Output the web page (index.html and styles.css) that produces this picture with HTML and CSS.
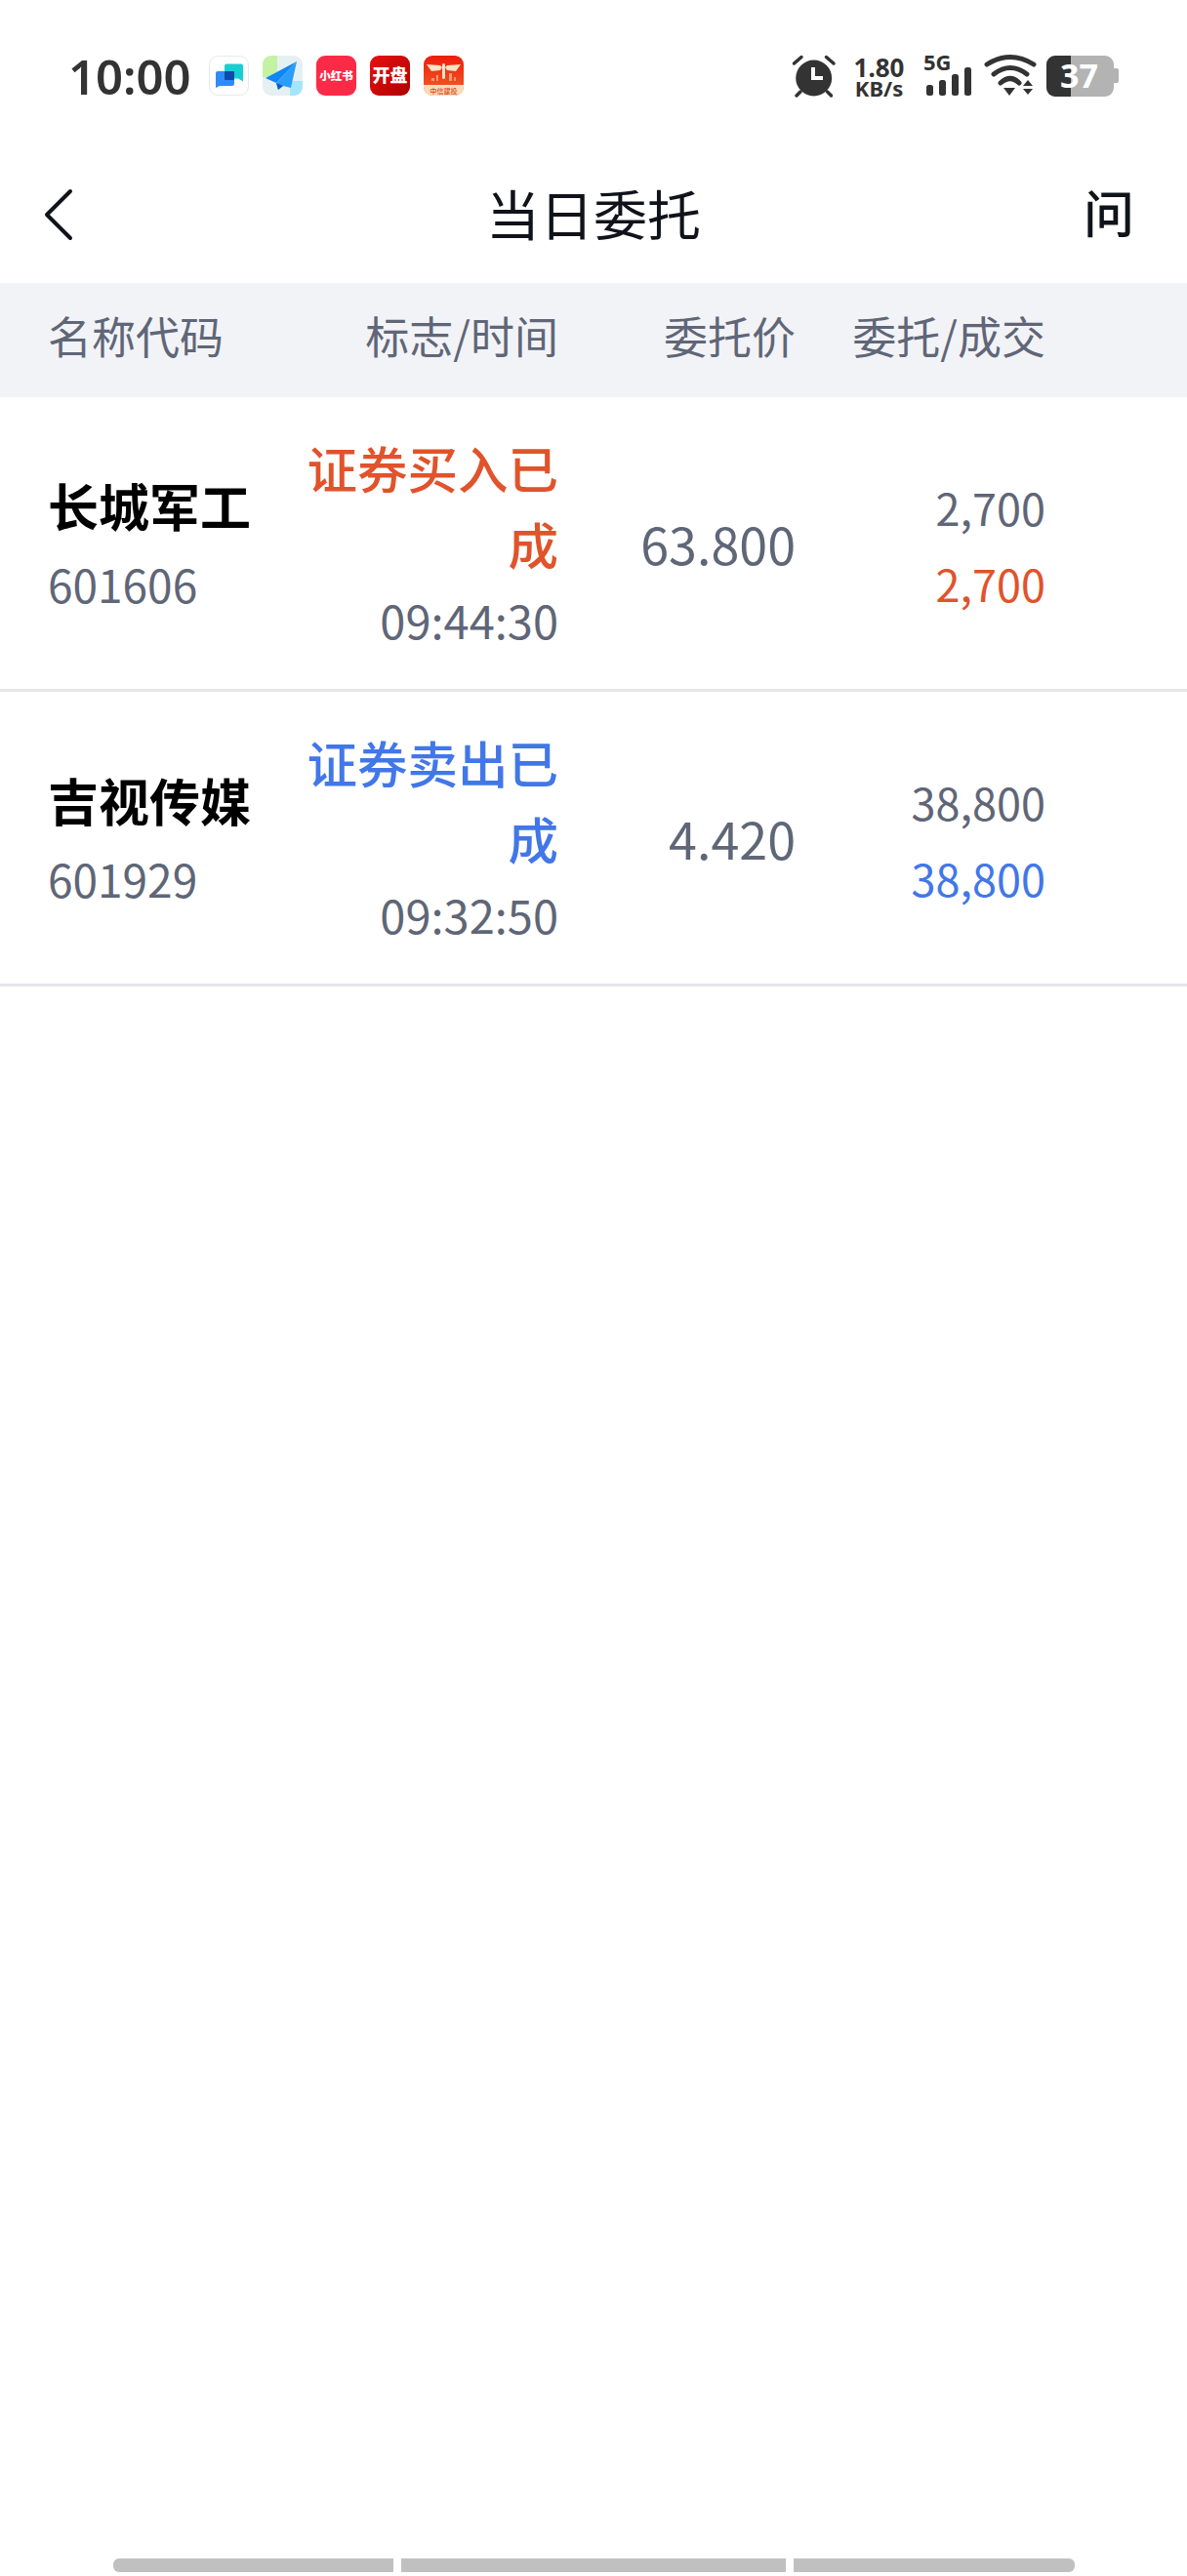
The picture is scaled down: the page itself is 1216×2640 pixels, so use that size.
FILE: index.html
```html
<!DOCTYPE html>
<html lang="zh-CN">
<head>
    <meta charset="UTF-8">
    <meta name="viewport" content="width=device-width, initial-scale=1.0">
    <title>当日委托</title>
    <link rel="stylesheet" href="styles.css">
</head>
<body>

    <div class="status-bar">
        <span class="clock">10:00</span>
        <div class="app-icons">
            <svg class="app-icon" viewBox="0 0 41 41">
                <rect x="0.5" y="0.5" width="40" height="40" rx="9" fill="#fff" stroke="#e6e9ea"/>
                <path d="M16 10.5a2 2 0 0 1 2-2h15a2 2 0 0 1 2 2v16l-5-3H18a2 2 0 0 1-2-2z" fill="#17cfd2"/>
                <path d="M7 18a2 2 0 0 1 2-2h15a2 2 0 0 1 2 2v11a2 2 0 0 1-2 2H11l-4 2z" fill="#2f8bf8"/>
                <rect x="16" y="16" width="10" height="9" rx="1" fill="#0b4bab"/>
            </svg>
            <svg class="app-icon" viewBox="0 0 41 41">
                <rect width="41" height="41" rx="9" fill="#e6f0f0"/>
                <path d="M0 9a9 9 0 0 1 9-9h6v22H0z" fill="#c5f2a2"/>
                <path d="M28 26h13v6a9 9 0 0 1-9 9h-4z" fill="#a3e6fb"/>
                <path d="M35 6L3 23l11 5z" fill="#0f86f5"/>
                <path d="M35 6L14 28l2 7 5-4 8 2z" fill="#2b9dfb"/>
                <path d="M14 28l2 7 5-4z" fill="#0a5fc4"/>
            </svg>
            <svg class="app-icon" viewBox="0 0 41 41">
                <rect width="41" height="41" rx="9" fill="#fb2a47"/>
                <text x="20.5" y="25" class="icon-text xhs">小红书</text>
            </svg>
            <svg class="app-icon" viewBox="0 0 41 41">
                <defs>
                    <linearGradient id="kp" x1="0" y1="0" x2="1" y2="1">
                        <stop offset="0" stop-color="#e81010"/>
                        <stop offset="1" stop-color="#b00000"/>
                    </linearGradient>
                    <linearGradient id="zx" x1="0" y1="0" x2="0" y2="1">
                        <stop offset="0" stop-color="#ee1c0c"/>
                        <stop offset="1" stop-color="#f2622a"/>
                    </linearGradient>
                </defs>
                <rect width="41" height="41" rx="9" fill="url(#kp)"/>
                <text x="20.5" y="27" class="icon-text kp">开盘</text>
            </svg>
            <svg class="app-icon" viewBox="0 0 41 41">
                <rect width="41" height="41" rx="9" fill="url(#zx)"/>
                <path d="M3 9l14 1 2 2-2 3-9 1zM38 9l-14 1-2 2 2 3 9 1z" fill="#fbe3c4"/>
                <rect x="19" y="8" width="3" height="16" rx="1.5" fill="#fbe3c4"/>
                <path d="M8 26v-3h3v3zM13 26v-6h2v6zM26 26v-8h3v8zM31 26v-4h2v4z" fill="#f79a70"/>
                <path d="M0 30h41v2a9 9 0 0 1-9 9H9a9 9 0 0 1-9-9z" fill="#fbdcb6"/>
                <text x="20.5" y="38.5" class="icon-text zx">中信建投</text>
            </svg>
        </div>

        <div class="status-right">
            <svg class="alarm" viewBox="0 0 44 42">
                <circle cx="21.7" cy="23" r="18.5" fill="#333"/>
                <path d="M21 12v11h10" fill="none" stroke="#fff" stroke-width="4"/>
                <path d="M1.5 8L9 1.5M42 8L34.5 1.5M4 41l4-4M39.5 41l-4-4" fill="none" stroke="#333" stroke-width="3.5" stroke-linecap="round"/>
            </svg>
            <div class="net-speed">
                <span class="speed-num">1.80</span>
                <span class="speed-unit">KB/s</span>
            </div>
            <svg class="signal" viewBox="0 0 50 42">
                <text x="0" y="15" class="signal-text">5G</text>
                <rect x="3" y="30" width="7" height="11" rx="2.5" fill="#333"/>
                <rect x="16" y="25" width="7" height="16" rx="2.5" fill="#333"/>
                <rect x="29" y="19" width="7" height="22" rx="2.5" fill="#333"/>
                <rect x="42" y="12" width="7" height="29" rx="2.5" fill="#333"/>
            </svg>
            <svg class="wifi" viewBox="0 0 51 41">
                <path d="M2 9Q26 -6 50 9M9 19Q26 6 43 19M16 28Q26 19 35 28" fill="none" stroke="#333" stroke-width="5" stroke-linecap="round"/>
                <path d="M19 33h12l-6 8zM39 31l5-6 5 6zM39 34h10l-5 6z" fill="#333"/>
            </svg>
            <svg class="battery" viewBox="0 0 74 42">
                <rect x="0" y="0" width="69" height="42" rx="9" fill="#b3b3b3"/>
                <path d="M25 0H9a9 9 0 0 0-9 9v24a9 9 0 0 0 9 9h16z" fill="#333"/>
                <path d="M69 13h3a2 2 0 0 1 2 2v11a2 2 0 0 1-2 2h-3z" fill="#b3b3b3"/>
                <text x="33.5" y="33" class="battery-text">37</text>
            </svg>
        </div>
    </div>

    <div class="nav-bar">
        <svg class="back-icon" viewBox="0 0 30 52">
            <path d="M27 2L3 26l24 24" fill="none" stroke="#10131a" stroke-width="4" stroke-linecap="round" stroke-linejoin="round"/>
        </svg>
        <h1>当日委托</h1>
        <span class="ask">问</span>
    </div>

    <div class="table-row table-head">
        <div class="col-name">名称代码</div>
        <div class="col-flag">标志/时间</div>
        <div class="col-price">委托价</div>
        <div class="col-qty">委托/成交</div>
    </div>

    <div class="table-row order">
        <div class="col-name">
            <div class="stock-name">长城军工</div>
            <div class="stock-code">601606</div>
        </div>
        <div class="col-flag">
            <div class="flag buy">证券买入已成</div>
            <div class="time">09:44:30</div>
        </div>
        <div class="col-price">63.800</div>
        <div class="col-qty">
            <div>2,700</div>
            <div class="buy">2,700</div>
        </div>
    </div>

    <div class="table-row order">
        <div class="col-name">
            <div class="stock-name">吉视传媒</div>
            <div class="stock-code">601929</div>
        </div>
        <div class="col-flag">
            <div class="flag sell">证券卖出已成</div>
            <div class="time">09:32:50</div>
        </div>
        <div class="col-price">4.420</div>
        <div class="col-qty">
            <div>38,800</div>
            <div class="sell">38,800</div>
        </div>
    </div>

    <div class="scroll-bars">
        <div class="bar bar-left"></div>
        <div class="bar bar-mid"></div>
        <div class="bar bar-right"></div>
    </div>

</body>
</html>
```

FILE: styles.css
```css
body {
    font-family: "Noto Sans CJK SC", "Noto Sans", sans-serif;
    background-color: #fff;
    color: #5f6677;
    margin: 0;
    height: 2640px;
    display: flex;
    flex-direction: column;
    overflow: hidden;
}

svg {
    overflow: visible;
}

/* Status bar */
.status-bar {
    height: 150px;
    box-sizing: border-box;
    padding: 57px 70px 0 70px;
    display: flex;
    align-items: flex-start;
    color: #333;
}

.clock {
    font-family: "Noto Sans", sans-serif;
    font-size: 49px;
    font-weight: 600;
    line-height: 42px;
    width: 144px;
}

.app-icons {
    display: flex;
    gap: 14px;
}

.app-icon {
    width: 41px;
    height: 41px;
    display: block;
}

.icon-text {
    font-family: "Noto Sans CJK SC", sans-serif;
    font-weight: 900;
    text-anchor: middle;
}

.xhs {
    font-size: 11.5px;
    fill: #fff;
}

.kp {
    font-size: 18px;
    fill: #fff;
}

.zx {
    font-size: 7px;
    font-weight: 500;
    fill: #d9471f;
}

.status-right {
    margin-left: auto;
    display: flex;
    align-items: flex-start;
}

.alarm {
    width: 44px;
    height: 42px;
    margin-right: 19px;
}

.net-speed {
    width: 51px;
    height: 42px;
    display: flex;
    flex-direction: column;
    align-items: center;
    font-family: "Noto Sans", sans-serif;
    font-weight: 700;
    margin-right: 20px;
}

.speed-num {
    font-size: 26px;
    line-height: 24px;
}

.speed-unit {
    font-size: 22px;
    line-height: 18px;
}

.signal {
    width: 50px;
    height: 42px;
    margin-right: 13px;
}

.signal-text {
    font-family: "Noto Sans", sans-serif;
    font-size: 22px;
    font-weight: 700;
    fill: #333;
}

.wifi {
    width: 51px;
    height: 41px;
    margin-right: 12px;
}

.battery {
    width: 74px;
    height: 42px;
}

.battery-text {
    font-family: "Noto Sans", sans-serif;
    font-size: 34px;
    font-weight: 700;
    fill: #fff;
    text-anchor: middle;
}

/* Title bar */
.nav-bar {
    height: 140px;
    display: flex;
    align-items: center;
    justify-content: space-between;
    padding: 0 54px 0 45px;
    position: relative;
    color: #10131a;
}

.back-icon {
    width: 30px;
    height: 52px;
}

.nav-bar h1 {
    position: absolute;
    top: 0;
    left: 0;
    right: 0;
    margin: 0;
    text-align: center;
    font-size: 55px;
    font-weight: 400;
    line-height: 134px;
}

.ask {
    font-size: 52px;
    font-weight: 500;
    line-height: 1;
    margin-bottom: 6px;
}

/* Table */
.table-row {
    display: grid;
    grid-template-columns: 251px 272px 243px 256px;
    padding-left: 49px;
    align-items: center;
    text-align: right;
    font-size: 45px;
    line-height: 78px;
}

.table-head {
    box-sizing: border-box;
    height: 117px;
    padding-bottom: 10px;
    background-color: #f2f3f7;
}

.order {
    height: 299px;
    border-bottom: 3px solid #e5e5ea;
}

.col-name {
    text-align: left;
}

.order .col-name {
    padding-top: 2px;
    font-size: 46px;
}

.stock-name {
    font-size: 52px;
    font-weight: 700;
    color: #000;
}

.stock-code {
    margin-top: 2px;
}

.order .col-price {
    font-size: 52px;
}

.order .col-qty {
    padding-top: 5px;
}

.flag {
    font-size: 51.5px;
    font-weight: 500;
}

.time {
    font-size: 47px;
}

.buy {
    color: #e0532b;
}

.sell {
    color: #4277e8;
}

/* Bottom scroll indicator */
.scroll-bars {
    margin-top: auto;
    padding: 0 111px 4px 116px;
    display: flex;
    gap: 8px;
}

.bar {
    height: 14px;
    background-color: #c0c0c0;
}

.bar-left {
    width: 287px;
    border-radius: 6px 0 0 6px;
}

.bar-mid {
    width: 394px;
}

.bar-right {
    width: 288px;
    border-radius: 0 6px 6px 0;
}
```
